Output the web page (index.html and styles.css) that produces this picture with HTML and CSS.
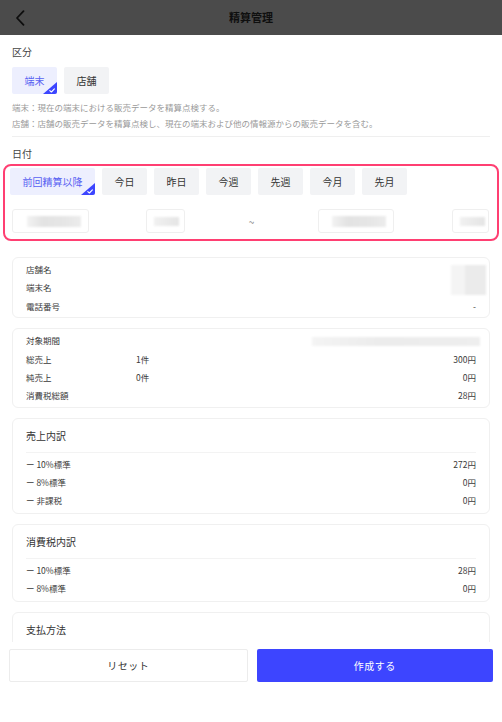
FILE: index.html
```html
<!DOCTYPE html>
<html lang="ja">
<head>
<meta charset="utf-8">
<title>精算管理</title>
<link rel="stylesheet" href="styles.css">
</head>
<body>
<div class="app">
  <header class="topbar">
    <span class="back">
      <svg width="10" height="16" viewBox="0 0 10 16"><path d="M8.5 1.2 L2 8 L8.5 14.8" fill="none" stroke="#0d0d0d" stroke-width="1.8" stroke-linecap="round" stroke-linejoin="round"/></svg>
    </span>
    <h1 class="title">精算管理</h1>
    <span></span>
  </header>

  <main class="scroll">
    <div class="label">区分</div>
    <div class="chips">
      <button class="chip chip-on">端末<svg class="tick" width="14" height="12" viewBox="0 0 14 12"><path d="M14 0V12H0Z" fill="#3c45ff"/><path d="M6.8 8.6 L8.4 10 L11.4 6.8" fill="none" stroke="#fff" stroke-width="1.1" stroke-linecap="round" stroke-linejoin="round"/></svg></button>
      <button class="chip">店舗</button>
    </div>
    <p class="desc desc-first">端末：現在の端末における販売データを精算点検する。</p>
    <p class="desc">店舗：店舗の販売データを精算点検し、現在の端末および他の情報源からの販売データを含む。</p>
    <div class="rule"></div>

    <div class="label">日付</div>
    <div class="datebox">
      <div class="chips chips-tight">
        <button class="chip chip-on">前回精算以降<svg class="tick" width="14" height="12" viewBox="0 0 14 12"><path d="M14 0V12H0Z" fill="#3c45ff"/><path d="M6.8 8.6 L8.4 10 L11.4 6.8" fill="none" stroke="#fff" stroke-width="1.1" stroke-linecap="round" stroke-linejoin="round"/></svg></button>
        <button class="chip">今日</button>
        <button class="chip">昨日</button>
        <button class="chip">今週</button>
        <button class="chip">先週</button>
        <button class="chip">今月</button>
        <button class="chip">先月</button>
      </div>
      <div class="range">
        <div class="pair">
          <div class="field f-date"><span class="blur blur-date"></span></div>
          <div class="field f-time"><span class="blur blur-time"></span></div>
        </div>
        <span class="tilde">~</span>
        <div class="pair pair-end">
          <div class="field f-date"><span class="blur blur-date"></span></div>
          <div class="field f-time"><span class="blur blur-time"></span></div>
        </div>
      </div>
    </div>

    <div class="cards">
      <section class="card">
        <div class="row"><span>店舗名</span><span></span><span class="val"></span></div>
        <div class="row"><span>端末名</span><span></span><span class="val"></span></div>
        <div class="row"><span>電話番号</span><span></span><span class="val">-</span></div>
        <span class="redact"></span>
      </section>

      <section class="card">
        <div class="row"><span>対象期間</span><span></span><span class="val"><span class="blur blur-period"></span></span></div>
        <div class="row"><span>総売上</span><span>1件</span><span class="val">300円</span></div>
        <div class="row"><span>純売上</span><span>0件</span><span class="val">0円</span></div>
        <div class="row"><span>消費税総額</span><span></span><span class="val">28円</span></div>
      </section>

      <section class="card card-titled">
        <div class="card-head">売上内訳</div>
        <div class="rows">
          <div class="row row-s"><span>ー 10%標準</span><span></span><span class="val">272円</span></div>
          <div class="row row-s"><span>ー 8%標準</span><span></span><span class="val">0円</span></div>
          <div class="row row-s"><span>ー 非課税</span><span></span><span class="val">0円</span></div>
        </div>
      </section>

      <section class="card card-titled">
        <div class="card-head">消費税内訳</div>
        <div class="rows">
          <div class="row row-s"><span>ー 10%標準</span><span></span><span class="val">28円</span></div>
          <div class="row row-s"><span>ー 8%標準</span><span></span><span class="val">0円</span></div>
        </div>
      </section>

      <section class="card card-titled card-tall">
        <div class="card-head">支払方法</div>
      </section>
    </div>
  </main>

  <footer class="actions">
    <button class="btn btn-ghost">リセット</button>
    <button class="btn btn-primary">作成する</button>
  </footer>
</div>
</body>
</html>
```

FILE: styles.css
```css
* { box-sizing: border-box; }

html, body {
  margin: 0;
  padding: 0;
  background: #fff;
}

body {
  font-family: "Noto Sans CJK JP", "Noto Sans", sans-serif;
  color: #333;
}

.app {
  height: 722px;
  display: flex;
  flex-direction: column;
  overflow: hidden;
}

/* top bar */
.topbar {
  flex: none;
  height: 35px;
  background: #4b4b4b;
  display: grid;
  grid-template-columns: 40px 1fr 40px;
  align-items: center;
}

.back {
  display: flex;
  align-items: center;
  padding-left: 15px;
}

.title {
  margin: 0;
  text-align: center;
  font-size: 11px;
  font-weight: 700;
  color: #0f0f0f;
  line-height: 35px;
}

/* scroll area */
.scroll {
  flex: 1;
  overflow: hidden;
  padding: 0 12px;
}

.label {
  margin-top: 10px;
  font-size: 10px;
  line-height: 14px;
  color: #444;
}

.chips {
  display: flex;
  gap: 7px;
  margin-top: 8px;
}

.chips-tight {
  margin-top: 0;
}

.chip {
  position: relative;
  overflow: hidden;
  height: 27px;
  min-width: 45px;
  padding: 0 12.5px;
  border: 0;
  border-radius: 2px;
  background: #f2f3f5;
  color: #333;
  font-family: inherit;
  font-size: 10px;
  line-height: 27px;
}

.chip-on {
  background: #edeffe;
  color: #5862f2;
}

.tick {
  position: absolute;
  right: 0;
  bottom: 0;
  display: block;
}

.desc {
  margin: 0;
  font-size: 8.5px;
  line-height: 16px;
  color: #9a9a9a;
  white-space: nowrap;
}

.desc-first {
  margin-top: 5px;
}

.rule {
  height: 1px;
  margin-top: 5px;
  background: #efefef;
}

/* date box */
.datebox {
  margin: 3px -9px 0;
  border: 2px solid #ff3f72;
  border-radius: 8px;
  padding: 2px 8px 6px 5px;
}

.range {
  display: flex;
  align-items: center;
  margin-top: 14px;
  padding-left: 2px;
}

.pair {
  display: flex;
  gap: 57px;
}

.pair-end {
  gap: 58px;
}

.pair-end .f-date {
  width: 76px;
  padding-left: 13px;
}

.pair-end .f-time {
  width: 37px;
}

.tilde {
  flex: 1;
  text-align: center;
  font-size: 10px;
  color: #8a8a8a;
}

.field {
  height: 24px;
  border: 1px solid #efefef;
  border-radius: 3px;
  display: flex;
  align-items: center;
  background: #fff;
}

.f-date {
  width: 77px;
  padding-left: 14px;
}

.f-time {
  width: 39px;
  padding-left: 7px;
}

.blur {
  display: inline-block;
  filter: blur(1.2px);
}

.blur-date {
  width: 54px;
  height: 11px;
  background: linear-gradient(90deg, #f3f3f3, #e3e3e3 30%, #e6e6e6 70%, #ececec);
}

.blur-time {
  width: 25px;
  height: 9px;
  background: linear-gradient(90deg, #f1f1f1, #e5e5e5);
}

.blur-period {
  width: 168px;
  height: 9px;
  margin-right: -4px;
  vertical-align: middle;
  background: linear-gradient(90deg, #f4f4f4, #ececec 40%, #eeeeee);
}

/* cards */
.cards {
  display: flex;
  flex-direction: column;
  gap: 10px;
  margin-top: 16px;
}

.card {
  position: relative;
  border: 1px solid #f0f0f0;
  border-radius: 6px;
  padding: 2px 13px;
  background: #fff;
}

.card-titled {
  padding: 0 13px 4px;
}

.card-tall {
  min-height: 80px;
}

.card-head {
  padding-top: 6px;
  padding-bottom: 5px;
  border-bottom: 1px solid #f3f3f3;
  font-size: 10px;
  line-height: 22px;
  color: #333;
}

.rows {
  padding-top: 2px;
}

.row {
  display: grid;
  grid-template-columns: 110px 1fr auto;
  font-size: 8.5px;
  line-height: 18.4px;
  color: #3a3a3a;
}

.row-s {
  line-height: 18px;
}

.val {
  text-align: right;
}

.redact {
  position: absolute;
  top: 7px;
  right: 3px;
  width: 35px;
  height: 30px;
  background:
    linear-gradient(90deg, #f4f4f4 0 40%, #ebebeb 40% 100%);
  filter: blur(1px);
}

/* footer */
.actions {
  flex: none;
  height: 80px;
  padding: 7px 9px 0;
  display: flex;
  align-items: flex-start;
  gap: 9px;
  background: #fff;
}

.btn {
  flex: 1;
  height: 33px;
  border-radius: 2px;
  font-family: inherit;
  font-size: 10px;
  letter-spacing: 0.5px;
}

.btn-ghost {
  background: #fff;
  border: 1px solid #ececec;
  color: #333;
}

.btn-primary {
  background: #3d45ff;
  border: 0;
  color: #fff;
}
```
